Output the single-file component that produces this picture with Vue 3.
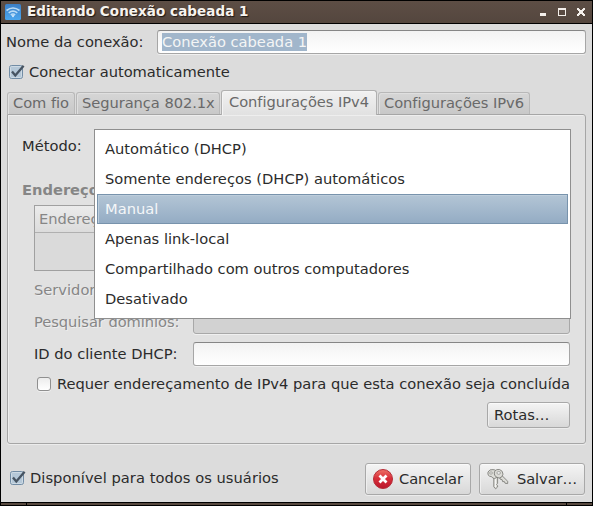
<script setup>
import { ref } from 'vue'

const tabs = [
  { label: 'Com fio', cls: 'tab-wired' },
  { label: 'Segurança 802.1x', cls: 'tab-security' },
  { label: 'Configurações IPv4', cls: 'tab-ipv4' },
  { label: 'Configurações IPv6', cls: 'tab-ipv6' },
]
const activeTab = ref(2)
const methods = [
  'Automático (DHCP)',
  'Somente endereços (DHCP) automáticos',
  'Manual',
  'Apenas link-local',
  'Compartilhado com outros computadores',
  'Desativado',
]
const method = ref(2)
</script>

<template>
  <div class="window">
    <header class="titlebar">
      <svg class="app-icon" width="16" height="16" viewBox="0 0 16 16">
        <defs>
          <linearGradient id="sky" x1="0" y1="0" x2="0" y2="1">
            <stop offset="0" stop-color="#3c7fc6" />
            <stop offset="1" stop-color="#4ba6ee" />
          </linearGradient>
        </defs>
        <rect width="16" height="16" rx="1.5" fill="url(#sky)" />
        <path d="M1.5 6.5Q8 1.6 14.5 6.5M3.7 8.8Q8 5.5 12.3 8.8M5.8 10.9Q8 9.2 10.2 10.9" fill="none" stroke="#b9dbf6" stroke-width="1.6" />
        <path d="M6.3 11.2L8 13.6L9.7 11.2Z" fill="#e8f5ff" />
      </svg>
      <h1 class="title">Editando Conexão cabeada 1</h1>
      <svg class="controls" width="46" height="8" viewBox="0 0 46 8" shape-rendering="crispEdges">
        <path d="M0 5h6v3H0z" fill="#f4efeb" />
        <path d="M18 0h8v8h-8zM19 2v5h6V2z" fill="#f4efeb" fill-rule="evenodd" />
        <path d="M37 0h2v1h1v1h2V1h1V0h2v2h-1v1h-1v2h1v1h1v2h-2V7h-1V6h-2v1h-1v1h-2V6h1V5h1V3h-1V2h-1z" fill="#f4efeb" />
      </svg>
    </header>

    <main class="content">
      <div class="name-row">
        <label class="name-label">Nome da conexão:</label>
        <div class="field name-field"><span class="selection">Conexão cabeada 1</span></div>
      </div>
      <div class="check-row auto-row">
        <svg class="check" width="16" height="16" viewBox="0 0 16 16">
          <rect x=".5" y="1.5" width="13" height="13" rx="2" fill="#b5c8d8" stroke="#718ca5" />
          <rect x="1.5" y="2.5" width="11" height="11" rx="1" fill="none" stroke="#cedae4" />
          <path d="M3 7.5L6.3 11.5L14.6 1.7" fill="none" stroke="#475462" stroke-width="2.3" />
        </svg>
        <span class="auto-text">Conectar automaticamente</span>
      </div>

      <nav class="tabs">
        <div v-for="(t, i) in tabs" :key="t.label" class="tab" :class="[t.cls, { active: i === activeTab }]">
          <span>{{ t.label }}</span>
        </div>
      </nav>

      <section class="pane">
        <div class="method-label">Método:</div>
        <div class="heading">Endereços</div>
        <div class="table"><div class="table-head">Endereço</div></div>
        <div class="form-row dim">
          <label><span class="servers">Servidor</span></label>
          <div class="field disabled"></div>
        </div>
        <div class="form-row dim">
          <label class="search-label">Pesquisar domínios:</label>
          <div class="field disabled"></div>
        </div>
        <div class="form-row">
          <label>ID do cliente DHCP:</label>
          <div class="field"></div>
        </div>
        <div class="check-row require-row">
          <span class="empty-check"></span>
          <span class="require-text">Requer endereçamento de IPv4 para que esta conexão seja concluída</span>
        </div>
        <div class="routes-row"><button class="btn routes"><span>Rotas…</span></button></div>

        <ul class="popup">
          <li v-for="(m, i) in methods" :key="m" :class="['m' + i, { selected: i === method }]"><span>{{ m }}</span></li>
        </ul>
      </section>

      <footer class="footer">
        <div class="check-row">
          <svg class="check" width="16" height="16" viewBox="0 0 16 16">
            <rect x=".5" y="1.5" width="13" height="13" rx="2" fill="#b5c8d8" stroke="#718ca5" />
            <rect x="1.5" y="2.5" width="11" height="11" rx="1" fill="none" stroke="#cedae4" />
            <path d="M3 7.5L6.3 11.5L14.6 1.7" fill="none" stroke="#475462" stroke-width="2.3" />
          </svg>
          <span class="all-text">Disponível para todos os usuários</span>
        </div>
        <div class="actions">
          <button class="btn big">
            <svg width="20" height="20" viewBox="0 0 20 20">
              <defs>
                <linearGradient id="red" x1="0" y1="0" x2="0" y2="1">
                  <stop offset="0" stop-color="#ee7468" />
                  <stop offset=".45" stop-color="#d9303a" />
                  <stop offset="1" stop-color="#b9162c" />
                </linearGradient>
              </defs>
              <circle cx="10" cy="10" r="9.5" fill="url(#red)" stroke="#b52c37" />
              <path d="M6.5 6.5L13.5 13.5M13.5 6.5L6.5 13.5" stroke="#fff" stroke-width="2.8" />
            </svg>
            <span class="cancel-text">Cancelar</span>
          </button>
          <button class="btn big save">
            <svg width="22" height="22" viewBox="0 0 22 22" stroke="#7f7f7b" stroke-width=".9" fill="#dcdcd7" stroke-linejoin="round">
              <path d="M12.5 8L14.2 6.8L20.8 13.4L20.6 15.6L18 15.2L17.4 13.6L15.6 13.6L15.2 11.8L13 11Z" />
              <path d="M6.8 9.5V18.8L8.6 20.8L10.6 19V17.6L9.6 16.6L10.6 15.4V9Z" />
              <path d="M1 4Q2.5 1 6 1.6Q10.5 2 10.6 6Q10.8 10 7.5 10.6Q5.5 10.4 4.6 8.6Q.2 8.6 1 4Z" />
              <path d="M7.6 3.4Q9.5 .8 12.6 1.5Q16 2.8 16 6.2Q15.4 9.8 12.2 10Q8.6 9.6 7.6 7Q7 5 7.6 3.4Z" />
              <ellipse cx="4" cy="5" rx="1.5" ry="1.1" fill="#f0f0f0" stroke-width=".6" />
              <ellipse cx="11.7" cy="4.9" rx="1.8" ry="1.4" fill="#f0f0f0" stroke-width=".6" />
              <path d="M8.4 11V19" stroke="#fbfbfa" />
            </svg>
            <span class="save-text">Salvar…</span>
          </button>
        </div>
      </footer>
    </main>
    <div class="grip"><i></i><i></i><i></i></div>
  </div>
</template>

<style>
body { margin: 0; background: #000; }
</style>

<style scoped>
* { box-sizing: border-box; }
.window {
  width: 593px; height: 506px; padding: 1px; background: #000; overflow: hidden;
  display: flex; flex-direction: column; color: #2b2b2b;
  font-family: "DejaVu Sans", sans-serif; font-size: 14.67px; line-height: 18px; white-space: nowrap;
}
.titlebar {
  height: 22px; margin-bottom: 1px; padding: 0 6px 0 4px; display: flex; align-items: center;
  background: linear-gradient(#5d4e45, #54463e); flex: none;
}
.title {
  margin: 0 0 0 6px; font-size: 13.5px; line-height: 18px; font-weight: bold; color: #f7f3ee;
  letter-spacing: .06px; text-shadow: 1px 1px 1px #1e1713; padding-bottom: 2px;
}
.controls { margin-left: auto; }
.content { height: 478px; flex: none; background: #dcdcdc; padding: 6px 6px 0; display: flex; flex-direction: column; }
.name-row { display: flex; height: 24px; margin-left: -1px; line-height: 24px; }
.name-label { width: 151px; }
.field {
  height: 24px; flex: 1; border: 1px solid #a6a6a6; border-top-color: #868686; border-radius: 3px;
  background: linear-gradient(#f3f3f3, #fff); box-shadow: 0 1px 0 #f0f0f0;
}
.name-field { padding: 2px 4px; }
.selection { display: block; width: 145px; height: 18px; line-height: 18px; background: #a1b6cb; color: #f4f5f5; }
.check-row { display: flex; align-items: center; height: 18px; }
.check { flex: none; }
.auto-row { margin: 9px 0 0 2px; }
.auto-text { margin-left: 4px; letter-spacing: -.03px; }

.tabs { display: flex; align-items: flex-end; gap: 1px; height: 24px; margin-top: 9px; position: relative; z-index: 1; }
.tab {
  height: 22px; padding: 1px 0 0 5px; border: 1px solid #b8b8b8; border-bottom: 0; border-radius: 3px 3px 0 0;
  background: linear-gradient(#d6d6d6, #c8c8c8); color: #696969; box-shadow: inset 1px 1px 0 #dfdfdf; letter-spacing: -.05px;
}
.tab-wired { width: 68px; }
.tab-security { width: 144px; }
.tab-ipv4 { width: 156px; }
.tab-ipv6 { width: 152px; }
.tab.active {
  height: 25px; margin-bottom: -1px; padding: 2px 0 0 7px; border-color: #b0b0b0;
  background: linear-gradient(#f1f1f1, #e1e1e1); box-shadow: inset 1px 1px 0 #f4f4f4;
}
.pane {
  position: relative; height: 330px; flex: none; border: 1px solid #a6a6a6; border-radius: 0 3px 3px 3px;
  background: #e1e1e1; padding: 22px 15px 0 14px; box-shadow: inset 1px 1px 0 #eee, 0 1px 0 #ececec;
}
.method-label { height: 18px; }
.heading { font-weight: bold; color: #868686; margin-top: 26px; height: 18px; }
.table { margin: 6px 0 0 12px; height: 66px; border: 1px solid #a0a0a0; background: #dadada; }
.table-head { height: 27px; border-bottom: 1px solid #b0b0b0; padding: 4px 0 0 4px; color: #868686; background: linear-gradient(#ebebeb, #dcdcdc); }
.form-row { display: flex; margin: 8px 0 0 12px; height: 24px; line-height: 24px; }
.table + .form-row { margin-top: 7px; }
.form-row label { width: 159px; }
.form-row .search-label { letter-spacing: -.05px; }
.dim { color: #868686; text-shadow: 1px 1px 0 #eee; }
.disabled { background: #d2d2d2; border-color: #a8a8a8; }
.require-row { margin: 9px 0 0 15px; }
.empty-check { width: 14px; height: 14px; border: 1px solid #8f8f8f; border-radius: 3px; background: linear-gradient(#ececec, #fff); box-shadow: 0 1px 0 #f0f0f0; }
.require-text { margin-left: 6px; }
.routes-row { display: flex; justify-content: flex-end; margin-top: 9px; }
.btn {
  font: inherit; color: inherit; margin: 0; padding: 0 0 0 6px; display: flex; align-items: center; text-align: left;
  border: 1px solid #a8a8a8; border-radius: 3px; background: linear-gradient(#f4f4f4, #d8d8d8);
  box-shadow: inset 0 1px 0 #fafafa, inset 1px 0 0 #efefef, 0 1px 0 #ececec;
}
.routes { width: 83px; height: 26px; }

.popup {
  position: absolute; left: 86px; top: 14px; width: 477px; height: 190px; margin: 0; padding: 4px 2px;
  list-style: none; background: #fff; border: 1px solid #8f8f8f;
}
.popup li { height: 30px; padding: 5px 7px; border: 1px solid transparent; }
.popup li.selected { border-color: #7893ac; background: linear-gradient(#b3c5d5, #94acc4); color: #f4f6f8; box-shadow: inset 1px 1px 0 #bdcddb; }
.popup .m1 { letter-spacing: .02px; }
.popup .m4 { letter-spacing: -.02px; }

.footer { display: flex; height: 32px; margin-top: 19px; padding: 0 1px 0 3px; justify-content: space-between; }
.footer .check-row { margin-top: 6px; }
.all-text { margin-left: 4px; letter-spacing: .04px; }
.actions { display: flex; gap: 8px; }
.big { width: 106px; height: 32px; padding-left: 7px; letter-spacing: -.1px; }
.cancel-text { margin-left: 6px; }
.save-text { margin-left: 8px; }
.grip { display: flex; gap: 1px; height: 2px; margin-top: 1px; }
.grip i { background: #58493f; width: 25px; }
.grip i:nth-child(2) { flex: 1; }
</style>
